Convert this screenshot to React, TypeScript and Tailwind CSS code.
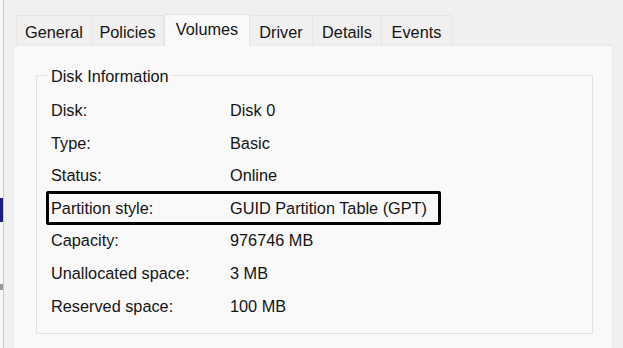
import React from "react";

const tabs = [
  { name: "General", w: 76 },
  { name: "Policies", w: 72 },
  { name: "Volumes", w: 86, active: true },
  { name: "Driver", w: 63 },
  { name: "Details", w: 69 },
  { name: "Events", w: 70 },
];

const rows: [string, string][] = [
  ["Disk:", "Disk 0"],
  ["Type:", "Basic"],
  ["Status:", "Online"],
  ["Partition style:", "GUID Partition Table (GPT)"],
  ["Capacity:", "976746 MB"],
  ["Unallocated space:", "3 MB"],
  ["Reserved space:", "100 MB"],
];

export default function App() {
  return (
    <div
      className="w-[623px] h-[348px] bg-[#f0f0f0] flex overflow-hidden text-[16.3px] text-[#141414]"
      style={{ fontFamily: '"Liberation Sans", Arial, sans-serif' }}
    >
      {/* left window edge */}
      <div className="w-[4px] h-full flex flex-col bg-[#f7f7f7] border-r border-[#c9c9c9]">
        <div className="h-[198px]" />
        <div className="h-[24px] w-[3px] bg-[#1c1c7a]" />
        <div className="h-[62px]" />
        <div className="h-[6px] w-[3px] bg-[#9a9a9a]" />
      </div>

      <div className="flex-1 pl-[9px] pt-[14px]">
        {/* tabs */}
        <div className="flex items-end pl-[3px] h-[31px] relative z-10">
          {tabs.map((t) =>
            t.active ? (
              <div
                key={t.name}
                style={{ width: t.w }}
                className="h-[32px] -mb-[1px] bg-[#f9f9f9] border border-b-0 border-[#e4e4e4] flex items-center justify-center pb-[2px]"
              >
                {t.name}
              </div>
            ) : (
              <div
                key={t.name}
                style={{ width: t.w }}
                className="h-[30px] bg-[#f0f0f0] border border-l-0 first:border-l border-b-0 border-[#e6e6e6] flex items-center justify-center pt-[3px]"
              >
                {t.name}
              </div>
            )
          )}
        </div>

        {/* panel */}
        <div className="w-[600px] h-[310px] bg-[#f9f9f9] border border-[#e8e8e8] pl-[22px] pt-[29px]">
          <div className="relative w-[557px] h-[259px] border border-[#e2e2e2]">
            <div className="absolute left-[12px] -top-[10px] px-[2px] bg-[#f9f9f9] leading-[20px]">
              Disk Information
            </div>
            <div className="pt-[18px] pl-[14px] flex flex-col">
              {rows.map(([k, v]) => (
                <div key={k} className="relative h-[32.6px] flex items-center">
                  <div className="w-[179px]">{k}</div>
                  <div>{v}</div>
                  {k === "Partition style:" && (
                    <div className="absolute left-[-5px] top-[-1px] w-[395px] h-[34px] border-[3px] border-black rounded-[2px]" />
                  )}
                </div>
              ))}
            </div>
          </div>
        </div>
      </div>
    </div>
  );
}
